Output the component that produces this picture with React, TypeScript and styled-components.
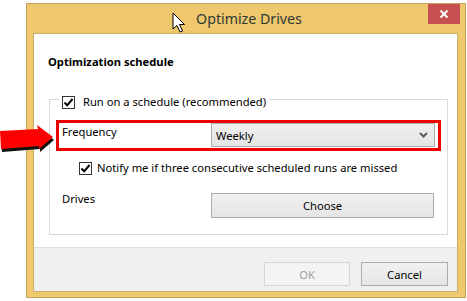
import React from 'react';
import styled, { createGlobalStyle } from 'styled-components';

const uiFont = `"Segoe UI", "Noto Sans", Arial, sans-serif`;

const GlobalStyle = createGlobalStyle`
  html, body {
    margin: 0;
    padding: 0;
    background: #ffffff;
  }
  body {
    font-family: ${uiFont};
    font-size: 11.2px;
    color: #000;
  }
`;

const Page = styled.div`
  position: relative;
  width: 467px;
  height: 301px;
  overflow: hidden;
  padding: 3px 0 0 26px;
  box-sizing: border-box;
`;

const Frame = styled.div`
  width: 440px;
  height: 295px;
  box-sizing: border-box;
  display: flex;
  flex-direction: column;
  background: #efc76c;
  border: 1px solid #c2a35c;
  padding: 0 7px 5px 6px;
`;

const TitleBar = styled.div`
  height: 29px;
  display: grid;
  grid-template-columns: 1fr auto 1fr;
  margin-right: -7px;
`;

const Title = styled.div`
  grid-column: 2;
  font-size: 14.2px;
  line-height: 30px;
  color: #2e3a36;
`;

const CloseButton = styled.div`
  grid-column: 3;
  justify-self: end;
  width: 32px;
  height: 20px;
  margin-right: 5px;
  background: #c75050;
  display: flex;
  align-items: center;
  justify-content: center;
`;

const Client = styled.div`
  flex: 1;
  display: flex;
  flex-direction: column;
  background: #ffffff;
  border: 1px solid #c9ad6b;
`;

const Body = styled.div`
  padding: 20px 9px 12px 14px;
`;

const Heading = styled.div`
  font-weight: bold;
  line-height: 16px;
`;

const Group = styled.div`
  margin: 29px 0 0 1px;
  border: 1px solid #dadada;
  padding-bottom: 16px;
  display: flex;
  flex-direction: column;
  align-items: flex-start;
`;

const Legend = styled.label`
  margin: -6px 0 0 9px;
  padding: 0 3px;
  background: #ffffff;
  display: flex;
  align-items: center;
  gap: 8px;
  line-height: 16px;
  height: 16px;
`;

const Highlight = styled.div`
  margin: 10px 0 0 6px;
  width: 385px;
  height: 31px;
  box-sizing: border-box;
  border: 3px solid #ee0000;
  padding: 0 3px 0 3px;
  display: flex;
  align-items: flex-start;
`;

const FieldRow = styled.div`
  margin: 17px 0 0 12px;
  display: flex;
  align-items: flex-start;
`;

const FieldLabel = styled.div<{ $offset: number }>`
  width: 149px;
  line-height: 16px;
  margin-top: ${(p) => p.$offset}px;
`;

const CheckRow = styled.label`
  margin: 9px 0 0 29px;
  display: flex;
  align-items: center;
  gap: 5px;
  line-height: 16px;
  height: 16px;
`;

const Box = styled.span`
  width: 13px;
  height: 13px;
  box-sizing: border-box;
  border: 1px solid #333333;
  background: #ffffff;
  display: flex;
  align-items: center;
  justify-content: center;
`;

const Select = styled.div`
  width: 224px;
  height: 24px;
  box-sizing: border-box;
  border: 1px solid #acacac;
  background: linear-gradient(#f0f0f0, #e5e5e5);
  display: flex;
  align-items: center;
  justify-content: space-between;
  padding: 0 6px 0 4px;
`;

const Button = styled.div<{ $disabled?: boolean; $width: number }>`
  width: ${(p) => p.$width}px;
  height: ${(p) => (p.$disabled !== undefined ? 24 : 25)}px;
  box-sizing: border-box;
  border: 1px solid ${(p) => (p.$disabled ? '#d5d5d5' : '#acacac')};
  background: ${(p) => (p.$disabled ? '#f4f4f4' : 'linear-gradient(#f0f0f0, #e5e5e5)')};
  color: ${(p) => (p.$disabled ? '#a0a0a0' : '#000')};
  display: flex;
  align-items: center;
  justify-content: center;
`;

const Footer = styled.div`
  flex: 1;
  border-top: 1px solid #dfdfdf;
  background: #f0f0f0;
  display: flex;
  justify-content: flex-end;
  align-items: flex-start;
  gap: 11px;
  padding: 14px 9px 0 0;
`;

const Pointer = styled.svg`
  position: absolute;
  left: 0;
  top: 120px;
`;

const Cursor = styled.svg`
  position: absolute;
  left: 172px;
  top: 12px;
`;

const Check = () => (
  <svg width="11" height="11" viewBox="0 0 11 11">
    <path d="M1.5 5.5 L4.2 8.3 L9.5 2" fill="none" stroke="#000" strokeWidth="2" />
  </svg>
);

const CheckBox = () => (
  <Box>
    <Check />
  </Box>
);

export default function App() {
  return (
    <>
      <GlobalStyle />
      <Page>
        <Frame>
          <TitleBar>
            <Title>Optimize Drives</Title>
            <CloseButton>
              <svg width="10" height="10" viewBox="0 0 10 10">
                <path d="M1.5 1.5 L8.5 8.5 M8.5 1.5 L1.5 8.5" stroke="#fff" strokeWidth="2" />
              </svg>
            </CloseButton>
          </TitleBar>
          <Client>
            <Body>
              <Heading>Optimization schedule</Heading>
              <Group>
                <Legend>
                  <CheckBox />
                  Run on a schedule (recommended)
                </Legend>
                <Highlight>
                  <FieldLabel $offset={1}>Frequency</FieldLabel>
                  <Select>
                    <span>Weekly</span>
                    <svg width="9" height="6" viewBox="0 0 9 6">
                      <path d="M1 1 L4.5 4.5 L8 1" fill="none" stroke="#5a5a5a" strokeWidth="2" />
                    </svg>
                  </Select>
                </Highlight>
                <CheckRow>
                  <CheckBox />
                  Notify me if three consecutive scheduled runs are missed
                </CheckRow>
                <FieldRow>
                  <FieldLabel $offset={-2}>Drives</FieldLabel>
                  <Button $width={223}>Choose</Button>
                </FieldRow>
              </Group>
            </Body>
            <Footer>
              <Button $disabled $width={86}>OK</Button>
              <Button $disabled={false} $width={87}>Cancel</Button>
            </Footer>
          </Client>
        </Frame>
        <Pointer width="56" height="34" viewBox="0 0 56 34">
          <polygon points="1,14 39,12 38,8 54,20 40,32 40,29 2,32" fill="#111" />
          <polygon points="0,11 38,9 37,5 53,17 39,29 39,26 1,29" fill="#ff0000" />
        </Pointer>
        <Cursor width="14" height="22" viewBox="0 0 14 22">
          <path d="M1 1 L1 17 L5 13.5 L8 20 L10.5 19 L7.5 12.5 L12.5 12.5 Z" fill="#fff" stroke="#000" strokeWidth="1" strokeLinejoin="round" />
        </Cursor>
      </Page>
    </>
  );
}
